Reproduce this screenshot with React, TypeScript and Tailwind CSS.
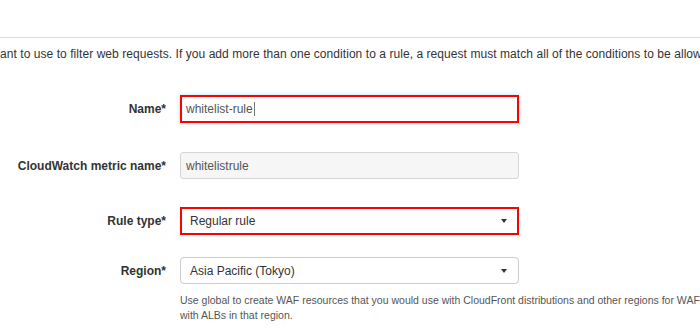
const font = { fontFamily: '"Liberation Sans", Arial, sans-serif' };

type RowProps = {
  label: string;
  className?: string;
  children: React.ReactNode;
};

const Row = ({ label, className, children }: RowProps) => (
  <div className={`flex items-center gap-[14px] ${className ?? ""}`}>
    <label className="w-[166px] shrink-0 text-right text-[12px] font-bold text-[#333]">
      {label}
    </label>
    {children}
  </div>
);

const Caret = () => (
  <span className="h-0 w-0 border-x-[3px] border-t-[4px] border-x-transparent border-t-[#333]" />
);

export default function App() {
  return (
    <div
      className="relative h-[330px] w-[700px] overflow-hidden bg-white text-[#333]"
      style={font}
    >
      <div className="h-[37px]" />
      <div className="h-px w-full bg-[#dcdcdc]" />
      <p className="mt-[8px] whitespace-nowrap text-[12px] leading-[16px] tracking-[0.005em] text-[#333]">
        ant to use to filter web requests. If you add more than one condition to a rule, a request
        must match all of the conditions to be allowed.
      </p>

      <div className="mt-[33px] flex flex-col">
        <Row label="Name*">
          <div className="flex h-[28px] w-[339px] items-center border-2 border-[#f00] bg-white pl-[4px] text-[12px] text-[#555] shadow-[0_0_4px_rgba(102,175,233,0.45)]">
            whitelist-rule
            <span className="ml-px h-[14px] w-px bg-[#777]" />
          </div>
        </Row>

        <Row label="CloudWatch metric name*" className="mt-[29px]">
          <div className="flex h-[27px] w-[339px] items-center rounded-[3px] border border-[#d6d6d6] bg-[#f6f6f6] pl-[5px] text-[12px] text-[#555]">
            whitelistrule
          </div>
        </Row>

        <Row label="Rule type*" className="mt-[28px]">
          <div className="flex h-[28px] w-[339px] items-center justify-between border-2 border-[#f00] bg-white pl-[8px] pr-[10px] text-[12px] text-[#333]">
            Regular rule
            <Caret />
          </div>
        </Row>

        <Row label="Region*" className="mt-[22px]">
          <div className="flex h-[27px] w-[339px] items-center justify-between rounded-[4px] border border-[#ccc] bg-white pl-[9px] pr-[11px] text-[12px] text-[#333]">
            Asia Pacific (Tokyo)
            <Caret />
          </div>
        </Row>

        <p className="ml-[180px] mt-[9px] whitespace-nowrap text-[10.5px] leading-[15px] text-[#555]">
          Use global to create WAF resources that you would use with CloudFront distributions and
          other regions for WAF resources
          <br />
          with ALBs in that region.
        </p>
      </div>
    </div>
  );
}
